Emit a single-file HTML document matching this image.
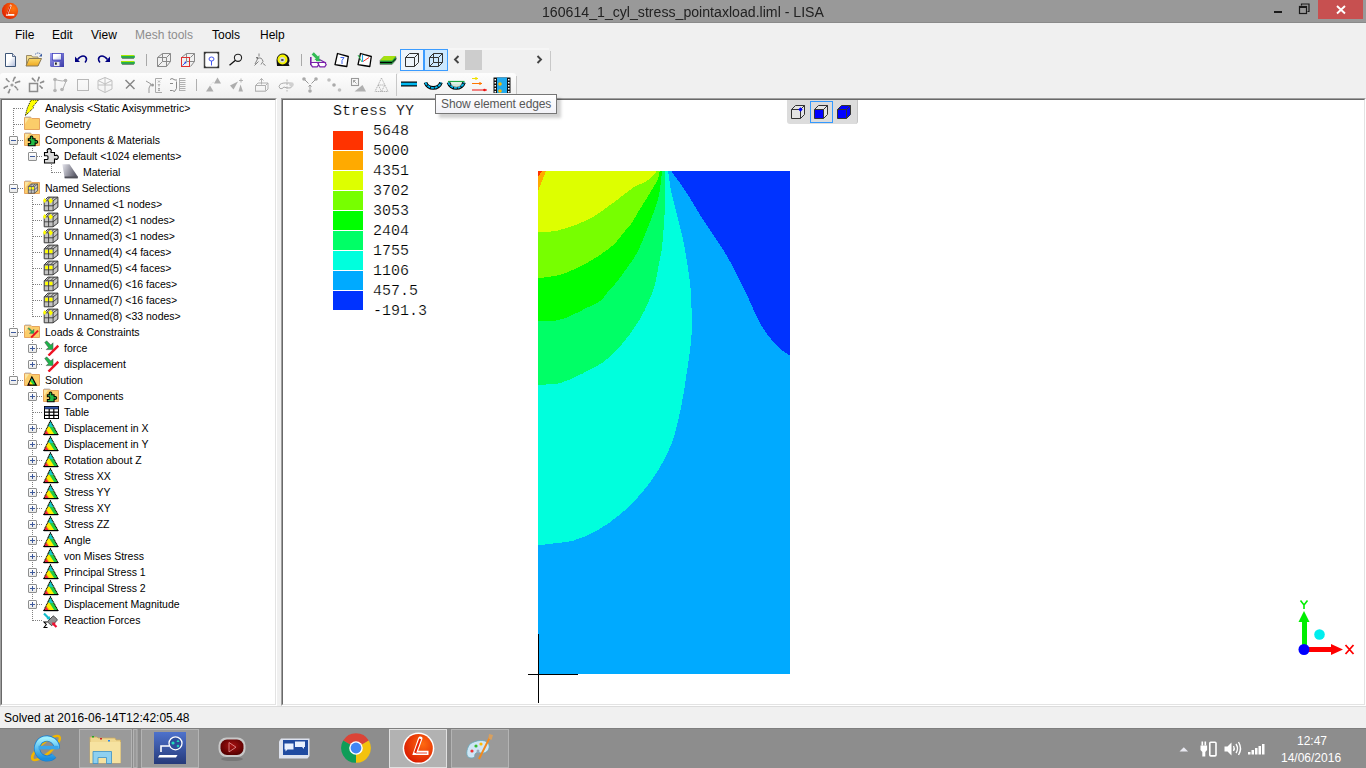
<!DOCTYPE html>
<html><head><meta charset="utf-8">
<style>
*{margin:0;padding:0;box-sizing:border-box}
html,body{width:1366px;height:768px;overflow:hidden;background:#f0f0f0}
body{font-family:"Liberation Sans",sans-serif;position:relative}
.a{position:absolute}
#title{left:0;top:0;width:1366px;height:23px;background:#999999;border-bottom:1px solid #8a8a8a}
#ttext{left:0;top:3px;width:1366px;text-align:center;font-size:15.4px;transform:scaleX(0.918);transform-origin:683px 0;color:#222;white-space:nowrap}
#close{left:1318px;top:0;width:45px;height:19px;background:#c75050}
#menu span{position:absolute;top:28px;font-size:12px;color:#000}
#tb2{left:0;top:73px;width:396px;height:25px;background:#f6f6f6;border-radius:3px 3px 0 0}
#tb2b{left:397px;top:73px;width:119px;height:25px;background:#f6f6f6;border-radius:3px 3px 0 0}
#left{left:0;top:98px;width:277px;height:608px;background:#fff;border-top:1px solid #a0a0a0;border-left:1px solid #a0a0a0;border-right:1px solid #fff;border-bottom:1px solid #fff}
#left::before,#view::before{content:"";position:absolute;left:0;top:0;right:0;bottom:0;border-top:1px solid #696969;border-left:1px solid #696969;border-right:1px solid #e3e3e3;border-bottom:1px solid #e3e3e3}
#view{left:281px;top:98px;width:1085px;height:608px;background:#fff;border-top:1px solid #a0a0a0;border-left:1px solid #a0a0a0;border-right:1px solid #fff;border-bottom:1px solid #fff}
#status{left:0;top:706px;width:1366px;height:22px;background:#f0f0f0;border-top:1px solid #dcdcdc}
#stext{left:4px;top:711px;font-size:12px;color:#000;white-space:nowrap}
#taskbar{left:0;top:728px;width:1366px;height:40px;background:#8b8b8b}
.mono{font-family:"Liberation Mono",monospace;font-size:15px;color:#000;-webkit-text-stroke:0.2px #fff;white-space:nowrap;line-height:17px}
.tray{font-size:12px;color:#fff;white-space:nowrap;line-height:14px}
.tree{position:absolute;font-size:10.5px;color:#000;white-space:nowrap;line-height:14px}
.hd{height:1px;background-image:linear-gradient(to right,#808080 50%,transparent 50%);background-size:2px 1px}
.vd{width:1px;background-image:linear-gradient(to bottom,#808080 50%,transparent 50%);background-size:1px 2px}
.exp{width:9px;height:9px;border:1px solid #8e8f8f;border-radius:1px;background:linear-gradient(#fff,#e8e8e8)}
.exp i{position:absolute;background:#3d5a9c}
.exp .h{left:1px;top:3px;width:5px;height:1px}
.exp .v{left:3px;top:1px;width:1px;height:5px}
</style></head><body>
<div id="title" class="a"></div>
<div id="ttext" class="a">160614_1_cyl_stress_pointaxload.liml - LISA</div>
<div id="menu">
<span style="left:15px">File</span>
<span style="left:52px">Edit</span>
<span style="left:91px">View</span>
<span style="left:135px;color:#8d8d8d">Mesh tools</span>
<span style="left:212px">Tools</span>
<span style="left:260px">Help</span>
</div>
<svg class="a" style="left:0;top:46px" width="560" height="27" viewBox="0 46 560 27">
<defs>
<linearGradient id="gdoc" x1="0" y1="0" x2="1" y2="1"><stop offset="0.45" stop-color="#fff"/><stop offset="1" stop-color="#aab8d8"/></linearGradient>
<linearGradient id="gfold" x1="0" y1="0" x2="0" y2="1"><stop offset="0" stop-color="#fbd968"/><stop offset="1" stop-color="#eea820"/></linearGradient>
<linearGradient id="gsave" x1="0" y1="0" x2="1" y2="1"><stop offset="0" stop-color="#9c9cf0"/><stop offset="1" stop-color="#3a3aa8"/></linearGradient>
<linearGradient id="glbl" x1="0" y1="0" x2="1" y2="1"><stop offset="0.4" stop-color="#fff"/><stop offset="1" stop-color="#c0c8e8"/></linearGradient>
</defs>
<!-- new doc -->
<path d="M5.5 53.5h7l3 3v10h-10z" fill="url(#gdoc)" stroke="#3d5577" stroke-width="1"/>
<path d="M12.5 53.5v3h3" fill="#dde" stroke="#3d5577" stroke-width="0.8"/>
<!-- open -->
<path d="M26.5 55.5h5l1 1.5h5.5v8.5h-11.5z" fill="#f3dc8c" stroke="#9a8a66" stroke-width="1"/>
<path d="M29 58.5h12.5l-3.5 7.5h-12z" fill="url(#gfold)" stroke="#8a7a56" stroke-width="1"/>
<path d="M35 54.5q3 -3 6 0" fill="none" stroke="#4a6aa8" stroke-width="1" stroke-dasharray="1.5 0.8"/>
<path d="M42 53.5v3h-3z" fill="#3a5aa0"/>
<!-- save -->
<path d="M50 53h14v14h-13l-1-1z" fill="url(#gsave)"/>
<rect x="52.5" y="53.5" width="9" height="6.5" fill="url(#glbl)" stroke="#3a3ab8" stroke-width="0.7"/>
<rect x="54" y="62" width="5.5" height="4" fill="#e8e8ee"/><rect x="55" y="62.5" width="1.8" height="2.2" fill="#222"/>
<!-- undo -->
<path d="M77.5 59.5q3-3.5 5.5-3.5q3 0 3.5 3q0 2-1.5 3.5" fill="none" stroke="#000080" stroke-width="1.6"/>
<path d="M75 56.5v5.5h5z" fill="#000080"/>
<!-- redo -->
<path d="M107.5 59.5q-3-3.5-5.5-3.5q-3 0-3.5 3q0 2 1.5 3.5" fill="none" stroke="#000080" stroke-width="1.6"/>
<path d="M110 56.5v5.5h-5z" fill="#000080"/>
<!-- equals -->
<rect x="121" y="55" width="14" height="3.5" rx="1.7" fill="#22b04a"/><rect x="121" y="55" width="13" height="1" fill="#a8e800"/><rect x="122" y="57.8" width="12" height="0.8" fill="#666"/>
<rect x="121" y="61" width="14" height="3.5" rx="1.7" fill="#22b04a"/><rect x="121" y="61" width="13" height="1" fill="#a8e800"/><rect x="122" y="63.8" width="12" height="0.8" fill="#666"/>
<!-- sep -->
<rect x="146" y="54" width="1" height="12" fill="#a8a8a8"/>
<!-- wire cube -->
<g fill="none" stroke="#8a8a8a" stroke-width="1"><path d="M157.5 57.5h9v9h-9zM162.5 53.5h8v8h-8zM157.5 57.5l5-4M166.5 57.5l4-4M166.5 66.5l4-5M157.5 66.5l5-5"/></g>
<!-- cube red -->
<g fill="none" stroke="#8a8a8a" stroke-width="1"><path d="M186.5 53.5h8v8h-8zM181.5 57.5l5-4M190.5 57.5l4-4M190.5 66.5l4-5"/></g>
<rect x="181.5" y="57.5" width="8" height="9" fill="none" stroke="#e03030" stroke-width="1"/>
<path d="M182.5 65.5l3.5-3.5" stroke="#2244ee" stroke-width="0.9"/><circle cx="185.5" cy="62.5" r="1" fill="#2244ee"/>
<!-- fit -->
<rect x="204.5" y="52.5" width="14" height="15" fill="#fff" stroke="#4a4a4a" stroke-width="1.5"/>
<path d="M204 52h3l-3 3zM219 52h-3l3 3zM204 68h3l-3-3zM219 68h-3l3-3z" fill="#333"/>
<ellipse cx="211.5" cy="59" rx="2.5" ry="2" fill="none" stroke="#4455ee" stroke-width="1"/><path d="M211.5 61v4.5" stroke="#4455ee" stroke-width="1"/>
<!-- magnifier -->
<circle cx="238" cy="57.8" r="3.6" fill="none" stroke="#222" stroke-width="1.1"/><path d="M235.5 60.3l-6 5" stroke="#111" stroke-width="1.3"/>
<!-- rotate figure -->
<g fill="none" stroke="#777" stroke-width="0.9"><path d="M259 53.5v3M257 58.5q5-2 6 3l-2 3M258 58l-3 6M263 63.5l2.5 2"/><path d="M254.5 65.5l4-4"/></g>
<path d="M256 57l2 0l-1 2z" fill="#555"/>
<!-- tape -->
<path d="M276.5 60a6.5 6.5 0 1 1 12 3.5l1 2.5h-12.5z" fill="#111"/>
<circle cx="282.5" cy="59.5" r="5" fill="#f4f400"/><circle cx="282.3" cy="59.8" r="2.8" fill="#d8d8d8"/><ellipse cx="282.3" cy="60" rx="1.5" ry="0.8" fill="#111"/>
<!-- sep -->
<rect x="301" y="54" width="1" height="12" fill="#a8a8a8"/>
<!-- glasses -->
<path d="M310.8 57v8" stroke="#7a22aa" stroke-width="1.6"/>
<path d="M311 62.5h6.5l1.2 2.2l-1.5 2.2h-4.7l-1.5-2.2zM318.5 62.5h6.5l1.2 2.2l-1.5 2.2h-4.7l-1.5-2.2z" fill="#fff" stroke="#7a22aa" stroke-width="1.2"/>
<path d="M317.5 58.5l8.5 4.5" stroke="#7a22aa" stroke-width="1.4"/>
<path d="M313.8 52.2l4.2 4.2l1.4-1.4v5h-5l1.4-1.4l-4.2-4.2z" fill="#33bb55"/>
<path d="M316 60.5h4.5" stroke="#33bb55" stroke-width="1.4"/>
<!-- doc 7 -->
<path d="M337.5 53.5l4 1.2l6.8 1.8l-1.5 10l-6.5-1l-5.3-0.8z" fill="#fff" stroke="#000" stroke-width="1.3" stroke-linejoin="round"/>
<path d="M340.5 57.5h3.5l-2 3v3.5" fill="none" stroke="#4466ee" stroke-width="1"/>
<!-- doc chart -->
<path d="M360.5 53.5l4 1.2l6.8 1.8l-1.5 10l-6.5-1l-5.3-0.8z" fill="#fff" stroke="#000" stroke-width="1.3" stroke-linejoin="round"/>
<path d="M358 55l4 7" stroke="#22bb44" stroke-width="0.9"/><path d="M362.5 55v7" stroke="#22aaee" stroke-width="1.1"/><path d="M363 61.5l6-4" stroke="#ee2222" stroke-width="0.9"/>
<!-- layer -->
<path d="M380 60.5l4-4h12v3.5l-4 4.5h-12z" fill="#22aa44" stroke="#777" stroke-width="0.7"/>
<path d="M380 60.5l4-4.5h12l-4 4.5z" fill="#a6e010"/>
<rect x="380" y="61.8" width="12" height="1.4" fill="#000"/><path d="M392 62.5l4-4" stroke="#000" stroke-width="1"/>
<rect x="448" y="48.5" width="101" height="1" fill="#fbfbfb"/>
<!-- toggled buttons -->
<rect x="400.5" y="49.5" width="23" height="21" fill="#eef4fb" stroke="#3c9cff" stroke-width="1"/>
<rect x="424.5" y="49.5" width="23" height="21" fill="#cce8ff" stroke="#3c9cff" stroke-width="1"/>
<g fill="none" stroke="#333" stroke-width="1"><path d="M405.5 57.5h9v9h-9zM405.5 57.5l4-4h9l-4 4M414.5 66.5l4-4v-9"/></g>
<g fill="none" stroke="#333" stroke-width="1"><path d="M429.5 57.5h9v9h-9zM433.5 53.5h9v9h-9zM429.5 57.5l4-4M438.5 57.5l4-4M438.5 66.5l4-4M429.5 66.5l4-4"/></g>
<!-- scroller -->
<path d="M458.5 56l-3.5 3.5l3.5 3.5" fill="none" stroke="#444" stroke-width="1.9"/>
<rect x="465" y="50" width="17" height="20" fill="#cdcdcd"/>
<path d="M537.5 56l3.5 3.5l-3.5 3.5" fill="none" stroke="#444" stroke-width="1.9"/>
<rect x="550" y="51" width="1" height="20" fill="#c8c8c8"/>
</svg><svg class="a" style="left:0;top:72px" width="560" height="26" viewBox="0 72 560 26">
<defs>
<linearGradient id="gtb2" x1="0" y1="0" x2="0" y2="1"><stop offset="0" stop-color="#fdfdfd"/><stop offset="1" stop-color="#f0f0f0"/></linearGradient>
</defs>
<path d="M0 98V76q0-3 3-3h393v25z" fill="url(#gtb2)"/>
<path d="M397 98V76q0-3 3-3h113q3 0 3 3v22z" fill="url(#gtb2)"/>
<rect x="396" y="74" width="1" height="22" fill="#c8c8c8"/>
<g fill="none" stroke="#8c8c8c" stroke-width="1.5">
<!-- star -->
<path d="M14.5 77.5l-1.5 4M19 81.5l-4 1.5M17 88.5l-2.5-2.5M8.5 93l1.5-4M4.5 87.5l3.5-1.5M6.5 79.5l3 2.5"/>
<!-- box burst -->
<path d="M29.5 83.5h8v8h-8z"/>
<path d="M39 77.5l-1.5 4M43.5 81.5l-3.5 1.5M42 88l-2.5-2.5M32.5 78.5l3 3"/>
</g>
<circle cx="12" cy="85" r="1.6" fill="#a0a0a0"/>
<g fill="#8c8c8c"><circle cx="15" cy="77.5" r="0.9"/><circle cx="19.5" cy="81.5" r="0.9"/><circle cx="17.5" cy="89.5" r="0.9"/><circle cx="8.5" cy="92.5" r="0.9"/><circle cx="4.3" cy="88" r="0.9"/><circle cx="6.5" cy="79" r="0.9"/>
<circle cx="39" cy="77.5" r="0.9"/><circle cx="43.5" cy="81.5" r="0.9"/><circle cx="42" cy="88" r="0.9"/><circle cx="32.5" cy="78.5" r="0.9"/></g>
<!-- polyline nodes -->
<path d="M55 79v12M55 79.5l4 1l3.5 0.5l4-1M66.5 80l-4 10" fill="none" stroke="#b0b0b0" stroke-width="1"/>
<g fill="#b4b4b4"><circle cx="55" cy="79.5" r="1.8"/><circle cx="65.5" cy="80.5" r="1.8"/><circle cx="55" cy="90.5" r="1.8"/><circle cx="62" cy="89.5" r="1.8"/></g>
<!-- square -->
<rect x="77.5" y="79.5" width="11" height="11" fill="none" stroke="#b8b8b8" stroke-width="1"/>
<!-- cube hex -->
<path d="M105 77.5l7 3v8.5l-7 3.5l-7-3.5v-8.5zM98 80.5l7 3.5l7-3.5M105 84v8.5M98 85l7 0l7 0M105 77.5v7" fill="none" stroke="#c0c0c0" stroke-width="1"/>
<!-- X -->
<path d="M125.5 80l9 9M134.5 80l-8.5 8.5" fill="none" stroke="#888" stroke-width="1.5"/>
<!-- joint xyz -->
<path d="M146 81l5 3l-2 4v5" fill="none" stroke="#999" stroke-width="1"/><circle cx="152.5" cy="85" r="1.5" fill="#999"/>
<path d="M155.5 78.5v14M155.5 78.5h6.5M155.5 92.5h6.5" fill="none" stroke="#aaa" stroke-width="1"/>
<path d="M158 80.5l2 2M160 80.5l-2 2M158 84l1 1.5l1-1.5M159 85.5v1M158 88.5h2M159 88.5v2M158 90.5h2" fill="none" stroke="#999" stroke-width="0.8"/>
<!-- 3 lines -->
<path d="M170 79.5l2-1l3 1.5h2M170 83.5h3M170 90.5h2.5l2 1l2-3v-7" fill="none" stroke="#888" stroke-width="1"/>
<path d="M179.5 78.5h6M179.5 80.5h6M179.5 82.5h6M179.5 84.5h6M179.5 86.5h6M179.5 88.5h6M179.5 90.5h6M179.5 78v13" fill="none" stroke="#a8a8a8" stroke-width="0.9"/>
<rect x="196" y="79" width="1" height="12" fill="#b0b0b0"/>
<!-- triangles -->
<path d="M206 91.5l4-6l3.5 6z" fill="#adadad"/><path d="M214 83.5l3.5-6l3.5 6z" fill="#adadad"/><path d="M211 84.5l3-3" stroke="#bbb" stroke-width="0.8" stroke-dasharray="1 1"/>
<path d="M230 85.5l8-4l-4.5 8z" fill="#adadad"/><path d="M238.5 91.5l2-7l2.5 7z" fill="#adadad"/><path d="M241 78.5v4M239 80.5h4" stroke="#aaa" stroke-width="0.9"/>
<!-- box arrow -->
<path d="M255.5 85.5l2.5-2.5h10v6l-2.5 2.5h-10zM255.5 85.5h10v6M265.5 85.5l2.5-2.5" fill="none" stroke="#b0b0b0" stroke-width="1"/><path d="M256 91l10 0" stroke="#ccc" stroke-width="1.2"/>
<path d="M261.5 84.5v-6M259.5 80.5l2-2l2 2" fill="none" stroke="#aaa" stroke-width="0.9"/>
<!-- ring -->
<path d="M287 79.5v12" stroke="#aaa" stroke-width="0.9" stroke-dasharray="2 1.5"/>
<path d="M280 84.5q2-2 9-1.5q4 0 3 3.5q-1 2-5 1.5l-3 -1q-2 2.5-4 1.5q-2-2 0-4z" fill="none" stroke="#aaa" stroke-width="1"/><circle cx="291.5" cy="84.5" r="2.3" fill="#d0d0d0"/>
<!-- merge -->
<g fill="#aaa"><circle cx="304" cy="79" r="1.8"/><circle cx="316" cy="79" r="1.8"/><circle cx="310" cy="91" r="1.8"/></g>
<path d="M305 80l3.5 3.5M315 80l-3.5 3.5M310 85v4M308.5 86.5l1.5-1.5l1.5 1.5" fill="none" stroke="#999" stroke-width="1"/>
<!-- dots -->
<g fill="#c0c0c0"><circle cx="329" cy="80" r="1.8"/><circle cx="334" cy="85" r="1.8" fill="#aaa"/><circle cx="339.5" cy="90" r="1.8"/></g>
<!-- arrow box triangle -->
<rect x="351.5" y="78.5" width="7" height="7" fill="none" stroke="#999" stroke-width="1.1"/><path d="M353.5 80.5l3 3M353.5 80.5h2M353.5 80.5v2" stroke="#999" stroke-width="0.9" fill="none"/>
<path d="M354.5 91.5l8-6.5l3.5 6.5z" fill="#b0b0b0"/>
<!-- tri subdiv -->
<path d="M381.5 78l-6.5 13.5h13zM378.2 85h6.6M378.2 85l3.3 6.5l3.3-6.5" fill="none" stroke="#aaa" stroke-width="0.9" stroke-dasharray="1.3 0.7"/>
<!-- blue line -->
<rect x="401" y="81.5" width="16" height="5" fill="#000"/><rect x="401" y="82.7" width="16" height="2.6" fill="#00b8f0"/>
<!-- bowls -->
<path d="M425.5 82.5a8 7.2 0 0 0 15.5 0" fill="none" stroke="#000" stroke-width="3.6"/><path d="M425.5 82.5a8 7.2 0 0 0 15.5 0" fill="none" stroke="#00b8f0" stroke-width="1.8" stroke-dasharray="3 0.8"/>
<path d="M448.5 82.5a8 7.2 0 0 0 15.5 0" fill="none" stroke="#000" stroke-width="3.6"/><path d="M448.5 82.5a8 7.2 0 0 0 15.5 0" fill="none" stroke="#00b8f0" stroke-width="1.8" stroke-dasharray="3 0.8"/>
<path d="M448 81.5h16.5" stroke="#22aa44" stroke-width="1.2"/><path d="M451 83.5a5.2 3.5 0 0 0 10.5 0" fill="#cfe8d8" stroke="#888" stroke-width="0.6"/>
<!-- arrows -->
<path d="M472 78.5h6" stroke="#f0e000" stroke-width="1"/><circle cx="476" cy="78.5" r="1.3" fill="#f0e000"/>
<path d="M472 83.5h10" stroke="#ff7700" stroke-width="1"/><circle cx="480" cy="83.5" r="1.3" fill="#ff7700"/>
<path d="M472 90h15" stroke="#ee1111" stroke-width="1"/><circle cx="484.5" cy="90" r="1.3" fill="#ee1111"/>
<!-- film -->
<rect x="493.5" y="77.5" width="17" height="15.5" fill="#111"/>
<rect x="497" y="77.5" width="10" height="15.5" fill="#22aaee"/>
<g fill="#fff"><rect x="494.5" y="79" width="1.5" height="1.5"/><rect x="494.5" y="82" width="1.5" height="1.5"/><rect x="494.5" y="85" width="1.5" height="1.5"/><rect x="494.5" y="88" width="1.5" height="1.5"/><rect x="494.5" y="91" width="1.5" height="1.5"/>
<rect x="508" y="79" width="1.5" height="1.5"/><rect x="508" y="82" width="1.5" height="1.5"/><rect x="508" y="85" width="1.5" height="1.5"/><rect x="508" y="88" width="1.5" height="1.5"/><rect x="508" y="91" width="1.5" height="1.5"/></g>
<circle cx="500" cy="84" r="1.8" fill="#ffbb00"/><circle cx="500" cy="91" r="1.8" fill="#ffbb00"/>
<rect x="516" y="76" width="1" height="22" fill="#c8c8c8"/>
</svg>
<div id="left" class="a"></div>
<div id="view" class="a"></div>
<div class="a hd" style="left:14px;top:108px;width:10px"></div><div class="a hd" style="left:14px;top:124px;width:10px"></div><div class="a hd" style="left:14px;top:140px;width:10px"></div><div class="a hd" style="left:33px;top:156px;width:10px"></div><div class="a hd" style="left:52px;top:172px;width:10px"></div><div class="a hd" style="left:14px;top:188px;width:10px"></div><div class="a hd" style="left:33px;top:204px;width:10px"></div><div class="a hd" style="left:33px;top:220px;width:10px"></div><div class="a hd" style="left:33px;top:236px;width:10px"></div><div class="a hd" style="left:33px;top:252px;width:10px"></div><div class="a hd" style="left:33px;top:268px;width:10px"></div><div class="a hd" style="left:33px;top:284px;width:10px"></div><div class="a hd" style="left:33px;top:300px;width:10px"></div><div class="a hd" style="left:33px;top:316px;width:10px"></div><div class="a hd" style="left:14px;top:332px;width:10px"></div><div class="a hd" style="left:33px;top:348px;width:10px"></div><div class="a hd" style="left:33px;top:364px;width:10px"></div><div class="a hd" style="left:14px;top:380px;width:10px"></div><div class="a hd" style="left:33px;top:396px;width:10px"></div><div class="a hd" style="left:33px;top:412px;width:10px"></div><div class="a hd" style="left:33px;top:428px;width:10px"></div><div class="a hd" style="left:33px;top:444px;width:10px"></div><div class="a hd" style="left:33px;top:460px;width:10px"></div><div class="a hd" style="left:33px;top:476px;width:10px"></div><div class="a hd" style="left:33px;top:492px;width:10px"></div><div class="a hd" style="left:33px;top:508px;width:10px"></div><div class="a hd" style="left:33px;top:524px;width:10px"></div><div class="a hd" style="left:33px;top:540px;width:10px"></div><div class="a hd" style="left:33px;top:556px;width:10px"></div><div class="a hd" style="left:33px;top:572px;width:10px"></div><div class="a hd" style="left:33px;top:588px;width:10px"></div><div class="a hd" style="left:33px;top:604px;width:10px"></div><div class="a hd" style="left:33px;top:620px;width:10px"></div><div class="a vd" style="left:13px;top:108px;height:273px"></div><div class="a vd" style="left:32px;top:148px;height:9px"></div><div class="a vd" style="left:32px;top:196px;height:121px"></div><div class="a vd" style="left:32px;top:340px;height:25px"></div><div class="a vd" style="left:32px;top:388px;height:233px"></div><div class="a vd" style="left:51px;top:164px;height:9px"></div><svg class="a" style="left:24px;top:100px" width="16" height="16" viewBox="0 0 16 16"><path d="M6.9 0H14.5L8.8 6.8L9.8 7.6L1.3 15.7L3.3 8Z" fill="#ffff00" stroke="#000" stroke-width="1" stroke-dasharray="1 1"/></svg><div class="tree" style="left:45px;top:101px">Analysis &lt;Static Axisymmetric&gt;</div><svg class="a" style="left:24px;top:116px" width="16" height="16" viewBox="0 0 16 16"><path d="M0.5 1.5h6.5l1 1h7.5v11h-15z" fill="#fbcd6a" stroke="#e6a45e"/><path d="M1 0.5h5.5l1 1h-6.5z" fill="#bcbcbc"/><path d="M1 2h4l-4 6z" fill="#fbe6a0"/></svg><div class="tree" style="left:45px;top:117px">Geometry</div><svg class="a" style="left:24px;top:132px" width="16" height="16" viewBox="0 0 16 16"><path d="M0.5 1.5h6.5l1 1h7.5v11h-15z" fill="#fbcd6a" stroke="#e6a45e"/><path d="M1 0.5h5.5l1 1h-6.5z" fill="#bcbcbc"/><path d="M1 2h4l-4 6z" fill="#fbe6a0"/><g transform="translate(3.3 3.6) scale(0.68)"><path d="M1.5 4.5h3v-1.2a1.1 1.1 0 0 1 0-1.6a2 2 0 0 1 3.5 0a1.1 1.1 0 0 1 0 1.6v1.2h3.5v3h1.2a1.1 1.1 0 0 1 1.6 0a2 2 0 0 1 0 3.5a1.1 1.1 0 0 1-1.6 0h-1.2v4h-10v-3.5h2.5a1 1 0 0 0 1-1v-1.8a1 1 0 0 0-1-1h-2.5z" fill="#22bb44" stroke="#000" stroke-width="1.5"/></g></svg><div class="tree" style="left:45px;top:133px">Components &amp; Materials</div><div class="a exp" style="left:9px;top:136px"><i class="h"></i></div><svg class="a" style="left:43px;top:148px" width="16" height="16" viewBox="0 0 16 16"><path d="M1.5 4.5h3v-1.2a1.1 1.1 0 0 1 0-1.6a2 2 0 0 1 3.5 0a1.1 1.1 0 0 1 0 1.6v1.2h3.5v3h1.2a1.1 1.1 0 0 1 1.6 0a2 2 0 0 1 0 3.5a1.1 1.1 0 0 1-1.6 0h-1.2v4h-10v-3.5h2.5a1 1 0 0 0 1-1v-1.8a1 1 0 0 0-1-1h-2.5z" fill="#dcdcdc" stroke="#000" stroke-width="1.1"/></svg><div class="tree" style="left:64px;top:149px">Default &lt;1024 elements&gt;</div><div class="a exp" style="left:28px;top:152px"><i class="h"></i></div><svg class="a" style="left:62px;top:164px" width="16" height="16" viewBox="0 0 16 16"><defs><linearGradient id="gmat" x1="0" y1="0" x2="1" y2="0.4"><stop offset="0" stop-color="#e4e4ec"/><stop offset="1" stop-color="#5c5c6a"/></linearGradient></defs><path d="M0.3 0.3h7.2l8.2 12.2v1.8h-13z" fill="url(#gmat)"/><path d="M2.6 12.4h13.1v1.9h-13z" fill="#505058"/></svg><div class="tree" style="left:83px;top:165px">Material</div><svg class="a" style="left:24px;top:180px" width="16" height="16" viewBox="0 0 16 16"><path d="M0.5 1.5h6.5l1 1h7.5v11h-15z" fill="#fbcd6a" stroke="#e6a45e"/><path d="M1 0.5h5.5l1 1h-6.5z" fill="#bcbcbc"/><path d="M1 2h4l-4 6z" fill="#fbe6a0"/><g transform="translate(3.5 3.2) scale(0.68)"><path d="M1.2 4.8l3.7-3.7h10v10l-4.8 3.7h-8.9z" fill="#c4c4c4" stroke="#3a3a3a" stroke-width="1"/><path d="M1.2 4.8h8.9v10M10.1 4.8l4.8-3.7M5.6 4.8v10M1.2 9.8h8.9M3.5 4.8l3.7-3.7M7.6 4.8l3.7-3.7M10.1 9.8l4.8-4" fill="none" stroke="#3a3a3a" stroke-width="0.9"/><rect x="2.2" y="5.8" width="2.8" height="3.4" fill="#ffff00"/><rect x="6.3" y="5.8" width="3.2" height="3.4" fill="#ffff00"/></g></svg><div class="tree" style="left:45px;top:181px">Named Selections</div><div class="a exp" style="left:9px;top:184px"><i class="h"></i></div><svg class="a" style="left:43px;top:196px" width="16" height="16" viewBox="0 0 16 16"><path d="M1.2 4.8l3.7-3.7h10v10l-4.8 3.7h-8.9z" fill="#c4c4c4" stroke="#3a3a3a" stroke-width="1"/><path d="M1.2 4.8h8.9v10M10.1 4.8l4.8-3.7M5.6 4.8v10M1.2 9.8h8.9M3.5 4.8l3.7-3.7M7.6 4.8l3.7-3.7M10.1 9.8l4.8-4" fill="none" stroke="#3a3a3a" stroke-width="0.9"/><path d="M1.5 2l2 2.5l-2 2.5l-1.5-2.5z" fill="#ffff00"/><path d="M7.6 2l2.4 2.8l-2.4 2.6l-2.2-2.6z" fill="#ffff00"/></svg><div class="tree" style="left:64px;top:197px">Unnamed &lt;1 nodes&gt;</div><svg class="a" style="left:43px;top:212px" width="16" height="16" viewBox="0 0 16 16"><path d="M1.2 4.8l3.7-3.7h10v10l-4.8 3.7h-8.9z" fill="#c4c4c4" stroke="#3a3a3a" stroke-width="1"/><path d="M1.2 4.8h8.9v10M10.1 4.8l4.8-3.7M5.6 4.8v10M1.2 9.8h8.9M3.5 4.8l3.7-3.7M7.6 4.8l3.7-3.7M10.1 9.8l4.8-4" fill="none" stroke="#3a3a3a" stroke-width="0.9"/><path d="M1.5 2l2 2.5l-2 2.5l-1.5-2.5z" fill="#ffff00"/><path d="M7.6 2l2.4 2.8l-2.4 2.6l-2.2-2.6z" fill="#ffff00"/></svg><div class="tree" style="left:64px;top:213px">Unnamed(2) &lt;1 nodes&gt;</div><svg class="a" style="left:43px;top:228px" width="16" height="16" viewBox="0 0 16 16"><path d="M1.2 4.8l3.7-3.7h10v10l-4.8 3.7h-8.9z" fill="#c4c4c4" stroke="#3a3a3a" stroke-width="1"/><path d="M1.2 4.8h8.9v10M10.1 4.8l4.8-3.7M5.6 4.8v10M1.2 9.8h8.9M3.5 4.8l3.7-3.7M7.6 4.8l3.7-3.7M10.1 9.8l4.8-4" fill="none" stroke="#3a3a3a" stroke-width="0.9"/><path d="M1.5 2l2 2.5l-2 2.5l-1.5-2.5z" fill="#ffff00"/><path d="M7.6 2l2.4 2.8l-2.4 2.6l-2.2-2.6z" fill="#ffff00"/></svg><div class="tree" style="left:64px;top:229px">Unnamed(3) &lt;1 nodes&gt;</div><svg class="a" style="left:43px;top:244px" width="16" height="16" viewBox="0 0 16 16"><path d="M1.2 4.8l3.7-3.7h10v10l-4.8 3.7h-8.9z" fill="#c4c4c4" stroke="#3a3a3a" stroke-width="1"/><path d="M1.2 4.8h8.9v10M10.1 4.8l4.8-3.7M5.6 4.8v10M1.2 9.8h8.9M3.5 4.8l3.7-3.7M7.6 4.8l3.7-3.7M10.1 9.8l4.8-4" fill="none" stroke="#3a3a3a" stroke-width="0.9"/><rect x="2.2" y="5.8" width="2.8" height="3.4" fill="#ffff00"/><rect x="6.3" y="5.8" width="3.2" height="3.4" fill="#ffff00"/></svg><div class="tree" style="left:64px;top:245px">Unnamed(4) &lt;4 faces&gt;</div><svg class="a" style="left:43px;top:260px" width="16" height="16" viewBox="0 0 16 16"><path d="M1.2 4.8l3.7-3.7h10v10l-4.8 3.7h-8.9z" fill="#c4c4c4" stroke="#3a3a3a" stroke-width="1"/><path d="M1.2 4.8h8.9v10M10.1 4.8l4.8-3.7M5.6 4.8v10M1.2 9.8h8.9M3.5 4.8l3.7-3.7M7.6 4.8l3.7-3.7M10.1 9.8l4.8-4" fill="none" stroke="#3a3a3a" stroke-width="0.9"/><rect x="2.2" y="5.8" width="2.8" height="3.4" fill="#ffff00"/><rect x="6.3" y="5.8" width="3.2" height="3.4" fill="#ffff00"/></svg><div class="tree" style="left:64px;top:261px">Unnamed(5) &lt;4 faces&gt;</div><svg class="a" style="left:43px;top:276px" width="16" height="16" viewBox="0 0 16 16"><path d="M1.2 4.8l3.7-3.7h10v10l-4.8 3.7h-8.9z" fill="#c4c4c4" stroke="#3a3a3a" stroke-width="1"/><path d="M1.2 4.8h8.9v10M10.1 4.8l4.8-3.7M5.6 4.8v10M1.2 9.8h8.9M3.5 4.8l3.7-3.7M7.6 4.8l3.7-3.7M10.1 9.8l4.8-4" fill="none" stroke="#3a3a3a" stroke-width="0.9"/><rect x="2.2" y="5.8" width="2.8" height="3.4" fill="#ffff00"/><rect x="6.3" y="5.8" width="3.2" height="3.4" fill="#ffff00"/></svg><div class="tree" style="left:64px;top:277px">Unnamed(6) &lt;16 faces&gt;</div><svg class="a" style="left:43px;top:292px" width="16" height="16" viewBox="0 0 16 16"><path d="M1.2 4.8l3.7-3.7h10v10l-4.8 3.7h-8.9z" fill="#c4c4c4" stroke="#3a3a3a" stroke-width="1"/><path d="M1.2 4.8h8.9v10M10.1 4.8l4.8-3.7M5.6 4.8v10M1.2 9.8h8.9M3.5 4.8l3.7-3.7M7.6 4.8l3.7-3.7M10.1 9.8l4.8-4" fill="none" stroke="#3a3a3a" stroke-width="0.9"/><rect x="2.2" y="5.8" width="2.8" height="3.4" fill="#ffff00"/><rect x="6.3" y="5.8" width="3.2" height="3.4" fill="#ffff00"/></svg><div class="tree" style="left:64px;top:293px">Unnamed(7) &lt;16 faces&gt;</div><svg class="a" style="left:43px;top:308px" width="16" height="16" viewBox="0 0 16 16"><path d="M1.2 4.8l3.7-3.7h10v10l-4.8 3.7h-8.9z" fill="#c4c4c4" stroke="#3a3a3a" stroke-width="1"/><path d="M1.2 4.8h8.9v10M10.1 4.8l4.8-3.7M5.6 4.8v10M1.2 9.8h8.9M3.5 4.8l3.7-3.7M7.6 4.8l3.7-3.7M10.1 9.8l4.8-4" fill="none" stroke="#3a3a3a" stroke-width="0.9"/><path d="M1.5 2l2 2.5l-2 2.5l-1.5-2.5z" fill="#ffff00"/><path d="M7.6 2l2.4 2.8l-2.4 2.6l-2.2-2.6z" fill="#ffff00"/></svg><div class="tree" style="left:64px;top:309px">Unnamed(8) &lt;33 nodes&gt;</div><svg class="a" style="left:24px;top:324px" width="16" height="16" viewBox="0 0 16 16"><path d="M0.5 1.5h6.5l1 1h7.5v11h-15z" fill="#fbcd6a" stroke="#e6a45e"/><path d="M1 0.5h5.5l1 1h-6.5z" fill="#bcbcbc"/><path d="M1 2h4l-4 6z" fill="#fbe6a0"/><g transform="translate(3 2.5) scale(0.72)"><path d="M2.8 1.6l4.6 4.6l2.3-2.6v6h-6.6l2.6-2.3l-4.6-4.6z" fill="#1db44a" stroke="#666" stroke-width="0.6"/><path d="M5.8 15.3l9.6-9.6" stroke="#ee1122" stroke-width="2.6"/></g></svg><div class="tree" style="left:45px;top:325px">Loads &amp; Constraints</div><div class="a exp" style="left:9px;top:328px"><i class="h"></i></div><svg class="a" style="left:43px;top:340px" width="16" height="16" viewBox="0 0 16 16"><path d="M1.8 2.6l1.8-1.8l4.2 4.2l2.2-2.2v6.8h-6.8l2.2-2.2z" fill="#1db44a" stroke="#555" stroke-width="0.6"/><path d="M5.5 15.5l9.8-9.8" stroke="#ee1122" stroke-width="2.4"/></svg><div class="tree" style="left:64px;top:341px">force</div><div class="a exp" style="left:28px;top:344px"><i class="h"></i><i class="v"></i></div><svg class="a" style="left:43px;top:356px" width="16" height="16" viewBox="0 0 16 16"><path d="M1.8 2.6l1.8-1.8l4.2 4.2l2.2-2.2v6.8h-6.8l2.2-2.2z" fill="#1db44a" stroke="#555" stroke-width="0.6"/><path d="M5.5 15.5l9.8-9.8" stroke="#ee1122" stroke-width="2.4"/></svg><div class="tree" style="left:64px;top:357px">displacement</div><div class="a exp" style="left:28px;top:360px"><i class="h"></i><i class="v"></i></div><svg class="a" style="left:24px;top:372px" width="16" height="16" viewBox="0 0 16 16"><path d="M0.5 1.5h6.5l1 1h7.5v11h-15z" fill="#fbcd6a" stroke="#e6a45e"/><path d="M1 0.5h5.5l1 1h-6.5z" fill="#bcbcbc"/><path d="M1 2h4l-4 6z" fill="#fbe6a0"/><g transform="translate(3.2 4.2) scale(0.62)"><path d="M7.45 1.1L14.7 14.4H1.2Z" fill="#ffee00"/><path d="M7.45 1.1L10.9 7.4L5.9 6.2Z" fill="#16cccc"/><path d="M5.9 6.2L10.9 7.4L14.7 14.4H10.6L4.7 7.6Z" fill="#22cc44"/><path d="M3.2 10.9L5.9 14.4H1.2Z" fill="#ee2244"/><path d="M7.45 1.1L14.7 14.4H1.2Z" fill="none" stroke="#000" stroke-width="1.8"/></g></svg><div class="tree" style="left:45px;top:373px">Solution</div><div class="a exp" style="left:9px;top:376px"><i class="h"></i></div><svg class="a" style="left:43px;top:388px" width="16" height="16" viewBox="0 0 16 16"><path d="M0.5 1.5h6.5l1 1h7.5v11h-15z" fill="#fbcd6a" stroke="#e6a45e"/><path d="M1 0.5h5.5l1 1h-6.5z" fill="#bcbcbc"/><path d="M1 2h4l-4 6z" fill="#fbe6a0"/><g transform="translate(3.3 3.6) scale(0.68)"><path d="M1.5 4.5h3v-1.2a1.1 1.1 0 0 1 0-1.6a2 2 0 0 1 3.5 0a1.1 1.1 0 0 1 0 1.6v1.2h3.5v3h1.2a1.1 1.1 0 0 1 1.6 0a2 2 0 0 1 0 3.5a1.1 1.1 0 0 1-1.6 0h-1.2v4h-10v-3.5h2.5a1 1 0 0 0 1-1v-1.8a1 1 0 0 0-1-1h-2.5z" fill="#22bb44" stroke="#000" stroke-width="1.5"/></g></svg><div class="tree" style="left:64px;top:389px">Components</div><div class="a exp" style="left:28px;top:392px"><i class="h"></i><i class="v"></i></div><svg class="a" style="left:43px;top:404px" width="16" height="16" viewBox="0 0 16 16"><rect x="1.5" y="2.5" width="14" height="12" fill="#fff" stroke="#000"/><rect x="1.5" y="2.5" width="14" height="2.5" fill="#3355aa" stroke="#000" stroke-width="0.5"/><path d="M1.5 8.2h14M1.5 11.4h14M6.2 5v9.5M10.8 5v9.5" stroke="#000" stroke-width="1.2"/></svg><div class="tree" style="left:64px;top:405px">Table</div><svg class="a" style="left:43px;top:420px" width="16" height="16" viewBox="0 0 16 16"><path d="M7.4 0.8L15 14.5H0.8Z" fill="#ffee00"/><path d="M7.4 0.8L11.1 7.6L4.8 6.5Z" fill="#16cccc"/><path d="M6.2 6.5L11.1 7.6L15 14.5H11.4Z" fill="#22cc44"/><path d="M3.1 10.5L6.2 14.5H0.8Z" fill="#ee2244"/><path d="M3.5 10.3L6.7 14.3" stroke="#ffaa00" stroke-width="0.8"/><path d="M7.4 0.8L15 14.5H0.8Z" fill="none" stroke="#000" stroke-width="1.1" stroke-dasharray="1.2 0.5"/><path d="M0.8 14.6H15" stroke="#000" stroke-width="1.2"/></svg><div class="tree" style="left:64px;top:421px">Displacement in X</div><div class="a exp" style="left:28px;top:424px"><i class="h"></i><i class="v"></i></div><svg class="a" style="left:43px;top:436px" width="16" height="16" viewBox="0 0 16 16"><path d="M7.4 0.8L15 14.5H0.8Z" fill="#ffee00"/><path d="M7.4 0.8L11.1 7.6L4.8 6.5Z" fill="#16cccc"/><path d="M6.2 6.5L11.1 7.6L15 14.5H11.4Z" fill="#22cc44"/><path d="M3.1 10.5L6.2 14.5H0.8Z" fill="#ee2244"/><path d="M3.5 10.3L6.7 14.3" stroke="#ffaa00" stroke-width="0.8"/><path d="M7.4 0.8L15 14.5H0.8Z" fill="none" stroke="#000" stroke-width="1.1" stroke-dasharray="1.2 0.5"/><path d="M0.8 14.6H15" stroke="#000" stroke-width="1.2"/></svg><div class="tree" style="left:64px;top:437px">Displacement in Y</div><div class="a exp" style="left:28px;top:440px"><i class="h"></i><i class="v"></i></div><svg class="a" style="left:43px;top:452px" width="16" height="16" viewBox="0 0 16 16"><path d="M7.4 0.8L15 14.5H0.8Z" fill="#ffee00"/><path d="M7.4 0.8L11.1 7.6L4.8 6.5Z" fill="#16cccc"/><path d="M6.2 6.5L11.1 7.6L15 14.5H11.4Z" fill="#22cc44"/><path d="M3.1 10.5L6.2 14.5H0.8Z" fill="#ee2244"/><path d="M3.5 10.3L6.7 14.3" stroke="#ffaa00" stroke-width="0.8"/><path d="M7.4 0.8L15 14.5H0.8Z" fill="none" stroke="#000" stroke-width="1.1" stroke-dasharray="1.2 0.5"/><path d="M0.8 14.6H15" stroke="#000" stroke-width="1.2"/></svg><div class="tree" style="left:64px;top:453px">Rotation about Z</div><div class="a exp" style="left:28px;top:456px"><i class="h"></i><i class="v"></i></div><svg class="a" style="left:43px;top:468px" width="16" height="16" viewBox="0 0 16 16"><path d="M7.4 0.8L15 14.5H0.8Z" fill="#ffee00"/><path d="M7.4 0.8L11.1 7.6L4.8 6.5Z" fill="#16cccc"/><path d="M6.2 6.5L11.1 7.6L15 14.5H11.4Z" fill="#22cc44"/><path d="M3.1 10.5L6.2 14.5H0.8Z" fill="#ee2244"/><path d="M3.5 10.3L6.7 14.3" stroke="#ffaa00" stroke-width="0.8"/><path d="M7.4 0.8L15 14.5H0.8Z" fill="none" stroke="#000" stroke-width="1.1" stroke-dasharray="1.2 0.5"/><path d="M0.8 14.6H15" stroke="#000" stroke-width="1.2"/></svg><div class="tree" style="left:64px;top:469px">Stress XX</div><div class="a exp" style="left:28px;top:472px"><i class="h"></i><i class="v"></i></div><svg class="a" style="left:43px;top:484px" width="16" height="16" viewBox="0 0 16 16"><path d="M7.4 0.8L15 14.5H0.8Z" fill="#ffee00"/><path d="M7.4 0.8L11.1 7.6L4.8 6.5Z" fill="#16cccc"/><path d="M6.2 6.5L11.1 7.6L15 14.5H11.4Z" fill="#22cc44"/><path d="M3.1 10.5L6.2 14.5H0.8Z" fill="#ee2244"/><path d="M3.5 10.3L6.7 14.3" stroke="#ffaa00" stroke-width="0.8"/><path d="M7.4 0.8L15 14.5H0.8Z" fill="none" stroke="#000" stroke-width="1.1" stroke-dasharray="1.2 0.5"/><path d="M0.8 14.6H15" stroke="#000" stroke-width="1.2"/></svg><div class="tree" style="left:64px;top:485px">Stress YY</div><div class="a exp" style="left:28px;top:488px"><i class="h"></i><i class="v"></i></div><svg class="a" style="left:43px;top:500px" width="16" height="16" viewBox="0 0 16 16"><path d="M7.4 0.8L15 14.5H0.8Z" fill="#ffee00"/><path d="M7.4 0.8L11.1 7.6L4.8 6.5Z" fill="#16cccc"/><path d="M6.2 6.5L11.1 7.6L15 14.5H11.4Z" fill="#22cc44"/><path d="M3.1 10.5L6.2 14.5H0.8Z" fill="#ee2244"/><path d="M3.5 10.3L6.7 14.3" stroke="#ffaa00" stroke-width="0.8"/><path d="M7.4 0.8L15 14.5H0.8Z" fill="none" stroke="#000" stroke-width="1.1" stroke-dasharray="1.2 0.5"/><path d="M0.8 14.6H15" stroke="#000" stroke-width="1.2"/></svg><div class="tree" style="left:64px;top:501px">Stress XY</div><div class="a exp" style="left:28px;top:504px"><i class="h"></i><i class="v"></i></div><svg class="a" style="left:43px;top:516px" width="16" height="16" viewBox="0 0 16 16"><path d="M7.4 0.8L15 14.5H0.8Z" fill="#ffee00"/><path d="M7.4 0.8L11.1 7.6L4.8 6.5Z" fill="#16cccc"/><path d="M6.2 6.5L11.1 7.6L15 14.5H11.4Z" fill="#22cc44"/><path d="M3.1 10.5L6.2 14.5H0.8Z" fill="#ee2244"/><path d="M3.5 10.3L6.7 14.3" stroke="#ffaa00" stroke-width="0.8"/><path d="M7.4 0.8L15 14.5H0.8Z" fill="none" stroke="#000" stroke-width="1.1" stroke-dasharray="1.2 0.5"/><path d="M0.8 14.6H15" stroke="#000" stroke-width="1.2"/></svg><div class="tree" style="left:64px;top:517px">Stress ZZ</div><div class="a exp" style="left:28px;top:520px"><i class="h"></i><i class="v"></i></div><svg class="a" style="left:43px;top:532px" width="16" height="16" viewBox="0 0 16 16"><path d="M7.4 0.8L15 14.5H0.8Z" fill="#ffee00"/><path d="M7.4 0.8L11.1 7.6L4.8 6.5Z" fill="#16cccc"/><path d="M6.2 6.5L11.1 7.6L15 14.5H11.4Z" fill="#22cc44"/><path d="M3.1 10.5L6.2 14.5H0.8Z" fill="#ee2244"/><path d="M3.5 10.3L6.7 14.3" stroke="#ffaa00" stroke-width="0.8"/><path d="M7.4 0.8L15 14.5H0.8Z" fill="none" stroke="#000" stroke-width="1.1" stroke-dasharray="1.2 0.5"/><path d="M0.8 14.6H15" stroke="#000" stroke-width="1.2"/></svg><div class="tree" style="left:64px;top:533px">Angle</div><div class="a exp" style="left:28px;top:536px"><i class="h"></i><i class="v"></i></div><svg class="a" style="left:43px;top:548px" width="16" height="16" viewBox="0 0 16 16"><path d="M7.4 0.8L15 14.5H0.8Z" fill="#ffee00"/><path d="M7.4 0.8L11.1 7.6L4.8 6.5Z" fill="#16cccc"/><path d="M6.2 6.5L11.1 7.6L15 14.5H11.4Z" fill="#22cc44"/><path d="M3.1 10.5L6.2 14.5H0.8Z" fill="#ee2244"/><path d="M3.5 10.3L6.7 14.3" stroke="#ffaa00" stroke-width="0.8"/><path d="M7.4 0.8L15 14.5H0.8Z" fill="none" stroke="#000" stroke-width="1.1" stroke-dasharray="1.2 0.5"/><path d="M0.8 14.6H15" stroke="#000" stroke-width="1.2"/></svg><div class="tree" style="left:64px;top:549px">von Mises Stress</div><div class="a exp" style="left:28px;top:552px"><i class="h"></i><i class="v"></i></div><svg class="a" style="left:43px;top:564px" width="16" height="16" viewBox="0 0 16 16"><path d="M7.4 0.8L15 14.5H0.8Z" fill="#ffee00"/><path d="M7.4 0.8L11.1 7.6L4.8 6.5Z" fill="#16cccc"/><path d="M6.2 6.5L11.1 7.6L15 14.5H11.4Z" fill="#22cc44"/><path d="M3.1 10.5L6.2 14.5H0.8Z" fill="#ee2244"/><path d="M3.5 10.3L6.7 14.3" stroke="#ffaa00" stroke-width="0.8"/><path d="M7.4 0.8L15 14.5H0.8Z" fill="none" stroke="#000" stroke-width="1.1" stroke-dasharray="1.2 0.5"/><path d="M0.8 14.6H15" stroke="#000" stroke-width="1.2"/></svg><div class="tree" style="left:64px;top:565px">Principal Stress 1</div><div class="a exp" style="left:28px;top:568px"><i class="h"></i><i class="v"></i></div><svg class="a" style="left:43px;top:580px" width="16" height="16" viewBox="0 0 16 16"><path d="M7.4 0.8L15 14.5H0.8Z" fill="#ffee00"/><path d="M7.4 0.8L11.1 7.6L4.8 6.5Z" fill="#16cccc"/><path d="M6.2 6.5L11.1 7.6L15 14.5H11.4Z" fill="#22cc44"/><path d="M3.1 10.5L6.2 14.5H0.8Z" fill="#ee2244"/><path d="M3.5 10.3L6.7 14.3" stroke="#ffaa00" stroke-width="0.8"/><path d="M7.4 0.8L15 14.5H0.8Z" fill="none" stroke="#000" stroke-width="1.1" stroke-dasharray="1.2 0.5"/><path d="M0.8 14.6H15" stroke="#000" stroke-width="1.2"/></svg><div class="tree" style="left:64px;top:581px">Principal Stress 2</div><div class="a exp" style="left:28px;top:584px"><i class="h"></i><i class="v"></i></div><svg class="a" style="left:43px;top:596px" width="16" height="16" viewBox="0 0 16 16"><path d="M7.4 0.8L15 14.5H0.8Z" fill="#ffee00"/><path d="M7.4 0.8L11.1 7.6L4.8 6.5Z" fill="#16cccc"/><path d="M6.2 6.5L11.1 7.6L15 14.5H11.4Z" fill="#22cc44"/><path d="M3.1 10.5L6.2 14.5H0.8Z" fill="#ee2244"/><path d="M3.5 10.3L6.7 14.3" stroke="#ffaa00" stroke-width="0.8"/><path d="M7.4 0.8L15 14.5H0.8Z" fill="none" stroke="#000" stroke-width="1.1" stroke-dasharray="1.2 0.5"/><path d="M0.8 14.6H15" stroke="#000" stroke-width="1.2"/></svg><div class="tree" style="left:64px;top:597px">Displacement Magnitude</div><div class="a exp" style="left:28px;top:600px"><i class="h"></i><i class="v"></i></div><svg class="a" style="left:43px;top:612px" width="16" height="16" viewBox="0 0 16 16"><path d="M1 1.5l5 5" stroke="#11bbcc" stroke-width="2.2"/><path d="M7.5 8l-4 -1l3 -3z" fill="#11bbcc"/><rect x="6.5" y="4.5" width="6" height="8.5" rx="1" transform="rotate(45 9.5 8.75)" fill="#909090" stroke="#333" stroke-width="0.8"/><path d="M13.5 15l-3.5-3.5" stroke="#ee1133" stroke-width="2.2"/><path d="M9 10.5l4 0.3l-3 3z" fill="#ee1133"/><path d="M4.5 10h-3.5l2.3 2.5l-2.3 3h3.5" fill="none" stroke="#000" stroke-width="1.1"/></svg><div class="tree" style="left:64px;top:613px">Reaction Forces</div>
<svg class="a" style="left:0;top:0" width="1366" height="768" viewBox="0 0 1366 768" shape-rendering="crispEdges"><rect x="538" y="171" width="252" height="503" fill="#00aaff"/><path d="M668.10 171.00 C668.62 174.47 669.85 184.85 671.25 191.80 C672.65 198.75 674.76 205.75 676.50 212.70 C678.24 219.65 680.15 226.57 681.70 233.50 C683.25 240.43 684.58 247.35 685.80 254.30 C687.02 261.25 688.13 268.25 689.00 275.20 C689.87 282.15 690.58 286.03 691.00 296.00 C691.42 305.97 692.25 321.92 691.50 335.00 C690.75 348.08 688.28 362.27 686.50 374.50 C684.72 386.73 683.18 397.12 680.80 408.40 C678.42 419.68 675.88 432.05 672.20 442.20 C668.52 452.35 663.78 460.83 658.70 469.30 C653.62 477.77 647.92 485.67 641.70 493.00 C635.48 500.33 628.73 507.08 621.40 513.30 C614.07 519.52 605.60 525.78 597.70 530.30 C589.80 534.82 581.90 538.15 574.00 540.40 C566.10 542.65 556.30 542.95 550.30 543.80 C544.30 544.65 540.05 545.22 538.00 545.50 L538.00 171.00 Z" fill="#00ffdd"/><path d="M665.00 171.00 C665.00 176.21 665.17 193.57 665.00 202.25 C664.83 210.93 664.35 217.19 664.00 223.10 C663.65 229.01 663.32 233.05 662.90 237.70 C662.48 242.35 662.19 246.49 661.50 251.00 C660.81 255.51 659.90 258.98 658.75 264.75 C657.60 270.52 656.39 279.23 654.60 285.60 C652.81 291.98 650.43 297.45 648.00 303.00 C645.57 308.55 643.43 313.17 640.00 318.90 C636.57 324.63 631.47 332.07 627.40 337.40 C623.33 342.73 619.55 346.82 615.60 350.90 C611.65 354.98 607.93 358.78 603.70 361.90 C599.47 365.02 595.00 367.05 590.20 369.60 C585.40 372.15 579.13 375.23 574.90 377.20 C570.67 379.17 568.03 380.28 564.80 381.40 C561.57 382.52 559.97 383.33 555.50 383.90 C551.03 384.47 540.92 384.65 538.00 384.80 L538.00 171.00 Z" fill="#00ff66"/><path d="M661.90 171.00 C661.75 172.73 661.38 177.98 661.00 181.40 C660.62 184.82 660.22 188.07 659.60 191.50 C658.98 194.93 658.45 198.08 657.30 202.00 C656.15 205.92 654.54 210.10 652.70 215.00 C650.86 219.90 648.02 226.93 646.25 231.40 C644.48 235.87 643.81 237.92 642.10 241.80 C640.39 245.68 638.50 250.38 636.00 254.70 C633.50 259.02 630.32 263.15 627.10 267.70 C623.88 272.25 620.17 277.66 616.70 282.00 C613.23 286.34 609.03 290.58 606.30 293.75 C603.57 296.92 603.55 298.66 600.30 301.00 C597.05 303.34 591.87 305.27 586.80 307.80 C581.73 310.33 574.98 314.08 569.90 316.20 C564.82 318.32 561.62 319.62 556.30 320.50 C550.98 321.38 541.05 321.33 538.00 321.50 L538.00 171.00 Z" fill="#00ff00"/><path d="M659.80 171.00 C659.45 172.38 658.92 176.35 657.70 179.30 C656.48 182.25 654.41 185.40 652.50 188.70 C650.59 192.00 648.50 195.45 646.25 199.10 C644.00 202.75 641.42 206.60 639.00 210.60 C636.58 214.60 634.32 219.37 631.70 223.10 C629.08 226.83 626.23 229.47 623.30 233.00 C620.37 236.53 618.23 240.47 614.10 244.30 C609.97 248.13 603.70 252.53 598.50 256.00 C593.30 259.47 588.11 262.38 582.90 265.10 C577.69 267.82 571.60 270.57 567.25 272.30 C562.90 274.03 561.67 274.50 556.80 275.50 C551.92 276.50 541.13 277.83 538.00 278.30 L538.00 171.00 Z" fill="#77ff00"/><path d="M656.70 171.00 C656.00 171.87 654.58 174.28 652.50 176.20 C650.42 178.12 646.98 180.87 644.20 182.50 C641.42 184.13 638.58 184.45 635.80 186.00 C633.02 187.55 630.63 189.47 627.50 191.80 C624.37 194.13 620.53 197.33 617.00 200.00 C613.47 202.67 610.25 204.98 606.30 207.80 C602.35 210.62 598.07 214.18 593.30 216.90 C588.53 219.62 582.92 222.03 577.70 224.10 C572.48 226.17 565.92 228.11 562.00 229.30 C558.08 230.49 558.20 230.80 554.20 231.25 C550.20 231.70 540.70 231.88 538.00 232.00 L538.00 171.00 Z" fill="#ddff00"/><path d="M538 171H546L542 181L538 191Z" fill="#ffaa00"/><path d="M538 171H542L538 177Z" fill="#ff3300"/><path d="M671.25 171.00 C672.99 173.43 678.58 181.10 681.70 185.60 C684.83 190.10 686.95 193.14 690.00 198.00 C693.05 202.86 695.83 208.17 700.00 214.75 C704.17 221.33 711.12 231.62 715.00 237.50 C718.88 243.38 720.52 245.48 723.30 250.00 C726.08 254.52 728.92 259.39 731.70 264.60 C734.48 269.81 737.23 275.70 740.00 281.25 C742.77 286.80 745.52 291.99 748.30 297.90 C751.08 303.81 753.92 311.14 756.70 316.70 C759.48 322.26 762.23 327.08 765.00 331.25 C767.77 335.42 770.52 338.57 773.30 341.70 C776.08 344.82 778.92 347.70 781.70 350.00 C784.48 352.30 788.62 354.58 790.00 355.50 L790.00 171.00 Z" fill="#0033ff"/><rect x="538" y="634" width="1" height="69" fill="#000"/><rect x="528" y="674" width="50" height="1" fill="#000"/></svg>
<div class="a mono" style="left:333px;top:103px">Stress YY</div><div class="a" style="left:333px;top:131px;width:30px;height:19px;background:#ff3300"></div><div class="a" style="left:333px;top:151px;width:30px;height:19px;background:#ffaa00"></div><div class="a" style="left:333px;top:171px;width:30px;height:19px;background:#ddff00"></div><div class="a" style="left:333px;top:191px;width:30px;height:19px;background:#77ff00"></div><div class="a" style="left:333px;top:211px;width:30px;height:19px;background:#00ff00"></div><div class="a" style="left:333px;top:231px;width:30px;height:19px;background:#00ff66"></div><div class="a" style="left:333px;top:251px;width:30px;height:19px;background:#00ffdd"></div><div class="a" style="left:333px;top:271px;width:30px;height:19px;background:#00aaff"></div><div class="a" style="left:333px;top:291px;width:30px;height:19px;background:#0033ff"></div><div class="a mono" style="left:373px;top:123px">5648</div><div class="a mono" style="left:373px;top:143px">5000</div><div class="a mono" style="left:373px;top:163px">4351</div><div class="a mono" style="left:373px;top:183px">3702</div><div class="a mono" style="left:373px;top:203px">3053</div><div class="a mono" style="left:373px;top:223px">2404</div><div class="a mono" style="left:373px;top:243px">1755</div><div class="a mono" style="left:373px;top:263px">1106</div><div class="a mono" style="left:373px;top:283px">457.5</div><div class="a mono" style="left:373px;top:303px">-191.3</div><div class="a" style="left:439px;top:98px;width:122px;height:20px;background:rgba(0,0,0,0.18);filter:blur(1.5px)"></div><div class="a" style="left:435px;top:94px;width:122px;height:20px;background:linear-gradient(#fff,#f2f2f7);border:1px solid #767676;font-size:12px;color:#575757;padding-left:5px;padding-top:1px;line-height:17px;letter-spacing:-0.1px;white-space:nowrap">Show element edges</div><div class="a" style="left:787px;top:100px;width:71px;height:24px;background:#dcdcdc;border-radius:0 0 3px 3px;border-right:1px solid #c4c4c4"></div><div class="a" style="left:810px;top:101px;width:23px;height:22px;border:1px solid #3399ff"></div><svg class="a" style="left:790px;top:104px" width="16" height="16" viewBox="0 0 16 16"><path d="M1.5 5.5h9v9h-9z" fill="#e4e4e4"/><path d="M1.5 5.5l4-4h9l-4 4z" fill="#e4e4e4"/><path d="M10.5 5.5l4-4v9l-4 4z" fill="#e4e4e4"/><path d="M1.5 5.5h9v9h-9zM1.5 5.5l4-4h9l-4 4M10.5 5.5l4-4v9l-4 4" fill="none" stroke="#333" stroke-width="1"/><path d="M10.5 3.3l2.2 2.2l-2.2 2.2l-2.2-2.2z" fill="#0000ff"/></svg><svg class="a" style="left:813px;top:104px" width="16" height="16" viewBox="0 0 16 16"><path d="M1.5 5.5h9v9h-9z" fill="#0000ff"/><path d="M1.5 5.5l4-4h9l-4 4z" fill="#e4e4e4"/><path d="M10.5 5.5l4-4v9l-4 4z" fill="#e4e4e4"/><path d="M1.5 5.5h9v9h-9zM1.5 5.5l4-4h9l-4 4M10.5 5.5l4-4v9l-4 4" fill="none" stroke="#333" stroke-width="1"/></svg><svg class="a" style="left:836px;top:104px" width="16" height="16" viewBox="0 0 16 16"><path d="M1.5 5.5h9v9h-9z" fill="#0000ff"/><path d="M1.5 5.5l4-4h9l-4 4z" fill="#0000ff"/><path d="M10.5 5.5l4-4v9l-4 4z" fill="#0000ff"/><path d="M1.5 5.5h9v9h-9zM1.5 5.5l4-4h9l-4 4M10.5 5.5l4-4v9l-4 4" fill="none" stroke="#333" stroke-width="1"/></svg><svg class="a" style="left:1290px;top:596px" width="70" height="64" viewBox="1290 596 70 64">
<path d="M1300.5 600.5l3.5 4.5l3.5-4.5M1304 605v4" fill="none" stroke="#00ee00" stroke-width="1.6"/>
<path d="M1304 611l-5.5 11h11z" fill="#00ee00"/>
<rect x="1302" y="621" width="5" height="28" fill="#00ee00"/>
<rect x="1304" y="647" width="28" height="5" fill="#ff0000"/>
<path d="M1343 649.5l-12 -5.5v11z" fill="#ff0000"/>
<path d="M1345.5 645l8 9M1353.5 645l-8 9" stroke="#ff0000" stroke-width="1.8"/>
<circle cx="1304" cy="649.5" r="5.5" fill="#0000ff"/>
<circle cx="1319.5" cy="634.5" r="5.3" fill="#00eeee"/>
</svg>
<div id="status" class="a"></div>
<div id="stext" class="a">Solved at 2016-06-14T12:42:05.48</div>
<svg class="a" style="left:0;top:0" width="1366" height="24" viewBox="0 0 1366 24"><defs><radialGradient id="glogo" cx="0.7" cy="0.35" r="0.8"><stop offset="0" stop-color="#ff7a10"/><stop offset="1" stop-color="#dd1a00"/></radialGradient></defs>
<circle cx="10" cy="10.9" r="8.1" fill="url(#glogo)"/>
<path d="M10.5 4.5q1.5 0 1 1.5l-3.2 8h6v1.8h-8.5l4-10.5q0.3-0.8 0.7-0.8z" fill="#fff" opacity="0.95"/>
<path d="M10.3 5.6l-3.3 8.9" stroke="#e02000" stroke-width="1.2"/>
<rect x="1274" y="11" width="8" height="2" fill="#1a1a1a"/>
<path d="M1301.5 5.5v-1.5h7.5v7.5h-1.5" fill="none" stroke="#1a1a1a" stroke-width="1.2"/>
<rect x="1299.5" y="6.5" width="7" height="7" fill="none" stroke="#1a1a1a" stroke-width="1.2"/><rect x="1299" y="6" width="8" height="2" fill="#1a1a1a"/>
<rect x="1318" y="0" width="45" height="19" fill="#c75050"/>
<path d="M1337 6l8 7.5M1345 6l-8 7.5" stroke="#fff" stroke-width="1.9"/>
</svg><svg class="a" style="left:0;top:728px" width="1366" height="40" viewBox="0 728 1366 40"><defs>
<linearGradient id="gie" x1="0" y1="0" x2="0" y2="1"><stop offset="0" stop-color="#9ff0ff"/><stop offset="1" stop-color="#1a8ee0"/></linearGradient>
<linearGradient id="gapp" x1="0" y1="0" x2="0" y2="1"><stop offset="0" stop-color="#4e72cc"/><stop offset="1" stop-color="#263a7a"/></linearGradient>
<radialGradient id="gred" cx="0.5" cy="0.4" r="0.6"><stop offset="0" stop-color="#aa1111"/><stop offset="1" stop-color="#550000"/></radialGradient>
<radialGradient id="glisa" cx="0.65" cy="0.35" r="0.75"><stop offset="0" stop-color="#ff6a10"/><stop offset="1" stop-color="#d81800"/></radialGradient>
</defs>
<rect x="0" y="728" width="1366" height="40" fill="#8d8d8d"/>
<rect x="0" y="728" width="1366" height="1" fill="#7f7f7f"/>
<!-- IE -->
<ellipse cx="46" cy="748" rx="17.5" ry="5.5" transform="rotate(-40 46 748)" fill="none" stroke="#f2b600" stroke-width="2.4"/>
<path d="M54.07 755.57A10 10 0 1 1 57 748.5" fill="none" stroke="#1a7fd0" stroke-width="6.2"/>
<path d="M54.07 755.57A10 10 0 1 1 57 748.5" fill="none" stroke="url(#gie)" stroke-width="4.6"/>
<rect x="38.5" y="745.8" width="20" height="3.6" fill="#3aa6ea"/>
<path d="M33 759.5q-2-2 0.5-5.5" fill="none" stroke="#f2b600" stroke-width="2.4"/>
<!-- explorer button -->
<rect x="79.5" y="729.5" width="52" height="38" fill="#9a9a9a" stroke="#b4b4b4"/>
<rect x="133.5" y="729.5" width="3.5" height="38" fill="#9a9a9a" stroke="#b4b4b4"/>
<path d="M90 737h7l1 1h17l1 2h4.5v23h-30.5z" fill="#f0d890" stroke="#c8a860" stroke-width="0.8"/>
<rect x="92" y="736" width="2" height="1.5" fill="#22aa22"/><rect x="100" y="738" width="2" height="1.5" fill="#cc2222"/><rect x="108" y="740" width="2" height="1.5" fill="#2288ee"/>
<path d="M90 742h30.5v21h-30.5z" fill="#f6e2a0"/>
<path d="M93 751.5h18.5v12h-5v-6h-8.5v6h-5z" fill="#8ed0f0" stroke="#3a90c8" stroke-width="0.8"/>
<!-- app button -->
<rect x="141.5" y="729.5" width="57" height="38" fill="#9a9a9a" stroke="#b4b4b4"/>
<rect x="154" y="732" width="32" height="32" fill="url(#gapp)"/>
<circle cx="175.5" cy="743.3" r="6.5" fill="#2e4d9a" stroke="#fff" stroke-width="1.3"/>
<circle cx="173" cy="743" r="1.6" fill="#22ddbb"/><path d="M178 739.5l1.5 2.5h-3z" fill="#22ddbb"/><path d="M176.5 746l1.5-1.5l1.5 1.5l-1.5 1.5z" fill="#22ddbb"/>
<path d="M161 752v-6h8" fill="none" stroke="#fff" stroke-width="1.6"/><path d="M158 757.5h18l1.5 -2.5h-18z" fill="#fff"/>
<!-- red media -->
<ellipse cx="232" cy="759" rx="11" ry="2" fill="#777"/>
<rect x="218.5" y="737.5" width="27" height="19.5" rx="8" fill="#c8c8c8"/>
<rect x="220.5" y="739.5" width="23" height="15.5" rx="6.5" fill="url(#gred)"/>
<path d="M229 742.5l7 4.7l-7 4.7z" fill="none" stroke="#d88" stroke-width="0.9"/>
<!-- chat -->
<path d="M281 738.5h28.5v17.5l-2 2.5h-28.5v-17z" fill="#dde2ee"/>
<path d="M283 740h25v15h-25z" fill="#1f4aa0"/>
<path d="M284.5 743.5h9v6h-6l-2 2v-2h-1z" fill="#e8f0ff"/><path d="M295 741.5h10v5.5h-1v2l-2-2h-7z" fill="#e8f0ff"/>
<!-- chrome -->
<path d="M356.00 748.00L343.18 740.60A14.8 14.8 0 0 1 368.82 740.60Z" fill="#db4437"/><path d="M356.00 748.00L368.82 740.60A14.8 14.8 0 0 1 356.00 762.80Z" fill="#f4c20d"/><path d="M356.00 748.00L356.00 762.80A14.8 14.8 0 0 1 343.18 740.60Z" fill="#0f9d58"/><circle cx="356" cy="748" r="6.8" fill="#fff"/><circle cx="356" cy="748" r="5.4" fill="#4285f4"/>
<!-- LISA active -->
<rect x="389.5" y="729.5" width="57" height="38" fill="#b2b2b2" stroke="#e0e0e0"/>
<circle cx="418.5" cy="748.3" r="15.8" fill="#fff"/>
<circle cx="418.5" cy="748.3" r="14.3" fill="url(#glisa)"/>
<path d="M419.8 736.5q3.2-0.2 2.6 2.6l-4.2 11.6h10.3v4.2h-16.2l5.6-16.2q0.8-2.2 1.9-2.2z" fill="#fff"/><path d="M420.2 738.8l-5.1 14" stroke="#e82000" stroke-width="2"/><path d="M416 753h11" stroke="#e82000" stroke-width="0.8"/>
<!-- paint button -->
<rect x="451.5" y="729.5" width="57" height="38" fill="#9a9a9a" stroke="#b4b4b4"/>
<path d="M470 744c6-4 15-5 18-1s0 9-4 10s-5 -2-8 0s1 5-5 5s-5-9-1-14z" fill="#cfe6f6" stroke="#6ab" stroke-width="0.8"/>
<circle cx="472" cy="751" r="1.6" fill="#e33"/><circle cx="476" cy="746" r="1.6" fill="#3b3"/><circle cx="481" cy="744" r="1.6" fill="#fb0"/><circle cx="478" cy="751" r="1.5" fill="#9ab"/>
<path d="M490 737l-11 22" stroke="#f08a20" stroke-width="2"/><path d="M489 734l4 1l-1.5 5l-3 -1.5z" fill="#d8a060"/>
<!-- tray -->
<path d="M1179.5 751.5l4.3-4.3l4.3 4.3z" fill="#e8e8f0"/>
<g fill="#fff">
<rect x="1201.5" y="741.5" width="1.6" height="4"/><rect x="1204.5" y="741.5" width="1.6" height="4"/>
<path d="M1200.5 745.5h6.6v4.5l-1.8 2v4.5h-3v-4.5l-1.8-2z"/>
</g>
<rect x="1209.8" y="742.3" width="6.2" height="13.6" rx="1" fill="none" stroke="#fff" stroke-width="1.6"/>
<path d="M1224.5 746.5h3l4-4v13l-4-4h-3z" fill="#fff"/>
<g fill="none" stroke="#fff" stroke-width="1.4"><path d="M1233.5 746q1.5 2.5 0 5M1236 744q3 4.5 0 9M1238.5 742q4 6.5 0 13"/></g>
<g fill="#fff"><rect x="1248" y="752" width="2.5" height="2.5"/><rect x="1251.5" y="750" width="2.5" height="4.5"/><rect x="1255" y="748" width="2.5" height="6.5"/><rect x="1258.5" y="746" width="2.5" height="8.5"/><rect x="1262" y="744" width="2.5" height="10.5"/></g>
</svg><div class="a tray" style="left:1297px;top:734px">12:47</div><div class="a tray" style="left:1281px;top:751px">14/06/2016</div>
</body></html>
